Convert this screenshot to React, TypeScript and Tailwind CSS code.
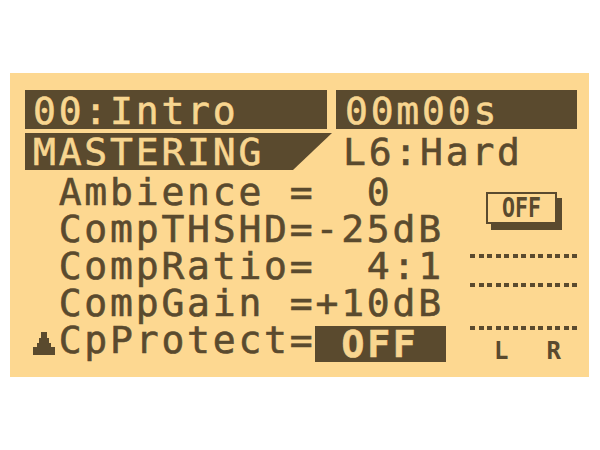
import React from "react";

const DARK = "#5a4a2e";

function Dots() {
  return (
    <div className="flex gap-[3.5px] ml-[2px]">
      {Array.from({ length: 13 }).map((_, i) => (
        <span key={i} className="block w-[5px] h-[4px] bg-[#5a4a2e]" />
      ))}
    </div>
  );
}

export default function App() {
  const mono =
    "font-['DejaVu_Sans_Mono',monospace] text-[38px] tracking-[2.8px] whitespace-pre [-webkit-text-stroke:0.6px_currentColor]";
  return (
    <div className="w-[600px] h-[450px] bg-white pt-[73px] pl-[10px]">
      <div className="w-[579px] h-[304px] bg-[#fdd891] pt-[17px] pl-[15px] flex flex-col text-[#5a4a2e]">
        {/* Row 1 */}
        <div className="flex h-[39px] gap-[9px]">
          <div className={`w-[302px] h-[39px] bg-[#5a4a2e] text-[#f8d690] pl-[8px] pt-[3px] leading-[36px] ${mono}`}>00:Intro</div>
          <div className={`w-[241px] h-[39px] bg-[#5a4a2e] text-[#f8d690] pl-[9px] pt-[3px] leading-[36px] ${mono}`}>00m00s</div>
        </div>
        {/* Row 2 */}
        <div className="flex h-[37px] mt-[4px]">
          <div
            className={`w-[307px] h-[37px] bg-[#5a4a2e] text-[#f8d690] pl-[8px] pt-[2px] leading-[35px] [clip-path:polygon(0_0,100%_0,calc(100%_-_39px)_100%,0_100%)] ${mono}`}
          >
            MASTERING
          </div>
          <div className={`ml-[11px] pt-[2px] leading-[35px] ${mono}`}>L6:Hard</div>
        </div>
        {/* Body */}
        <div className="flex mt-[4px]">
          <div className="w-[443px] pl-[8px] flex flex-col">
            <div className={`h-[37px] leading-[37px] ${mono}`}>{" Ambience =  0"}</div>
            <div className={`h-[37px] leading-[37px] ${mono}`}>{" CompTHSHD=-25dB"}</div>
            <div className={`h-[37px] leading-[37px] ${mono}`}>{" CompRatio=  4:1"}</div>
            <div className={`h-[37px] leading-[37px] ${mono}`}>{" CompGain =+10dB"}</div>
            <div className="flex h-[37px] items-start">
              <div className="w-[25.7px] pt-[10px]">
                <svg width="22" height="23" viewBox="0 0 22 23">
                  <path d="M8 0H14V6H16V11H18V15H22V23H0V15H4V11H6V6H8Z" fill={DARK} />
                </svg>
              </div>
              <div className={`leading-[37px] ${mono}`}>CpProtect=</div>
              <div
                className={`mt-[4px] w-[131px] h-[36px] bg-[#5a4a2e] text-[#f8d690] pl-[26px] leading-[36px] font-bold ${mono}`}
              >
                OFF
              </div>
            </div>
          </div>
          {/* Meters */}
          <div className="flex flex-col">
            <div className="ml-[18px] mt-[18px] w-[71px] h-[32px] border-2 border-[#5a4a2e] shadow-[5px_6px_0_#5a4a2e] flex items-center justify-center">
              <span className="font-['DejaVu_Sans_Mono',monospace] font-bold text-[27px] leading-none scale-x-[0.8] -mt-[1px]">
                OFF
              </span>
            </div>
            <div className="mt-[30px]">
              <Dots />
            </div>
            <div className="mt-[25px]">
              <Dots />
            </div>
            <div className="mt-[39px]">
              <Dots />
            </div>
            <div className="mt-[9px] flex font-['DejaVu_Sans_Mono',monospace] font-bold text-[24px] leading-none">
              <span className="ml-[26px]">L</span>
              <span className="ml-[38px]">R</span>
            </div>
          </div>
        </div>
      </div>
    </div>
  );
}
